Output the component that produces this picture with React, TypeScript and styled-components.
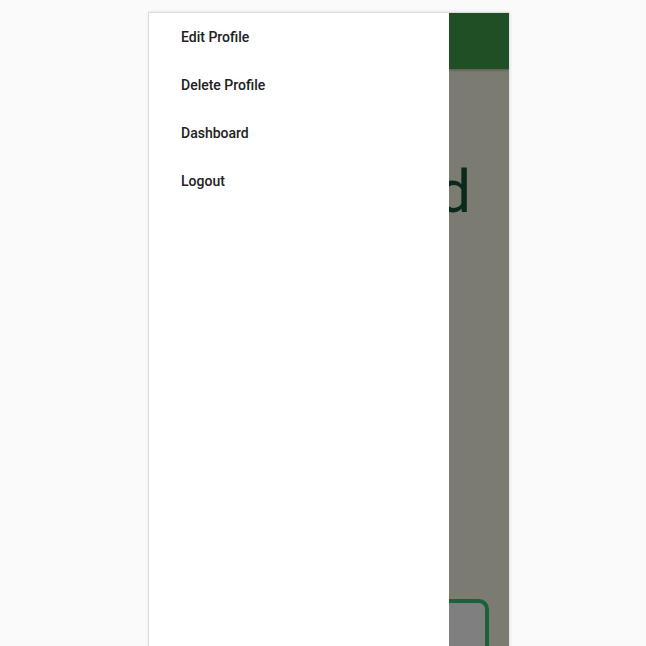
import React from "react";
import styled, { createGlobalStyle } from "styled-components";

const Global = createGlobalStyle`
  html, body { margin: 0; padding: 0; background: #fafafa; overflow: hidden; }
  body { font-family: Roboto, "Noto Sans", sans-serif; }
`;

const Stage = styled.div`
  padding: 12px 0 0 148px;
  height: 646px;
  box-sizing: border-box;
`;

const Phone = styled.div`
  position: relative;
  width: 361px;
  height: 700px;
  border-top: 1px solid #dcdcdc;
  border-left: 1px solid #dcdcdc;
  box-sizing: border-box;
  background: #f6f6e2;
  overflow: hidden;
  box-shadow: 1px 0 3px rgba(0, 0, 0, 0.12);
`;

const AppBar = styled.div`
  height: 56px;
  background: #439e4b;
  box-shadow: 0 1px 3px rgba(0, 0, 0, 0.3);
`;

const Content = styled.div`
  display: flex;
  flex-direction: column;
  align-items: flex-end;
  padding: 87px 20px 0 0;
`;

const Heading = styled.h1`
  margin: 0 18px 0 0;
  font-family: Roboto, sans-serif;
  font-weight: 400;
  font-size: 60px;
  line-height: 72px;
  color: #145436;
`;

const Card = styled.div`
  margin-top: 371px;
  width: 200px;
  height: 120px;
  border: 4px solid #34c070;
  border-radius: 10px;
  background: #ffffff;
`;

const Scrim = styled.div`
  position: absolute;
  inset: 0;
  background: rgba(0, 0, 0, 0.5);
`;

const Drawer = styled.nav`
  position: absolute;
  top: 0;
  left: 0;
  bottom: 0;
  width: 300px;
  background: #ffffff;
  display: flex;
  flex-direction: column;
`;

const Item = styled.div`
  height: 48px;
  display: flex;
  align-items: center;
  padding-left: 32px;
  font-family: Roboto, sans-serif;
  font-weight: 500;
  font-size: 14px;
  color: #212121;
`;

export default function App() {
  return (
    <>
      <Global />
      <Stage>
        <Phone>
          <AppBar />
          <Content>
            <Heading>Dashboard</Heading>
            <Card />
          </Content>
          <Scrim />
          <Drawer>
            {["Edit Profile", "Delete Profile", "Dashboard", "Logout"].map((t) => (
              <Item key={t}>{t}</Item>
            ))}
          </Drawer>
        </Phone>
      </Stage>
    </>
  );
}
